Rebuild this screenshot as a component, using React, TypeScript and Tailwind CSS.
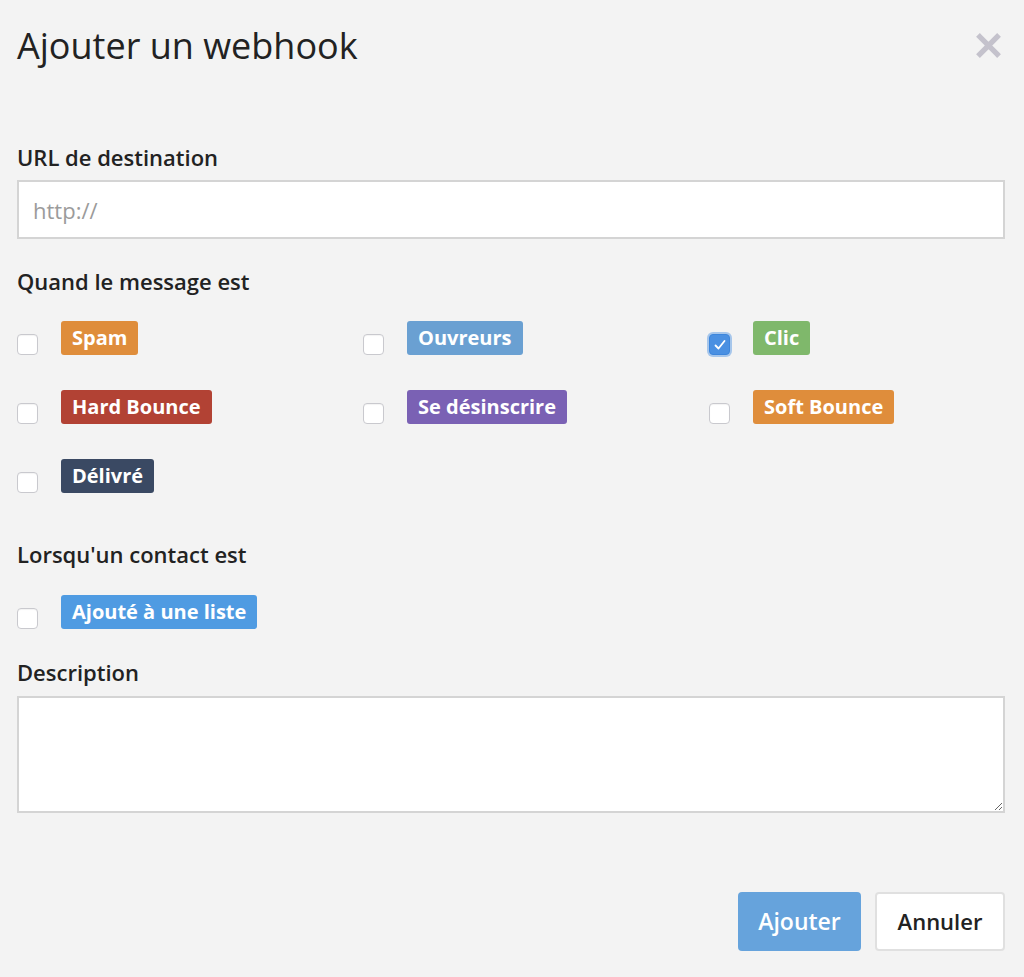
import React from 'react'

type Tag = { label: string; color: string; checked?: boolean }

const messageTags: Tag[] = [
  { label: 'Spam', color: 'bg-[#df8d3b]' },
  { label: 'Ouvreurs', color: 'bg-[#6aa0d2]' },
  { label: 'Clic', color: 'bg-[#7fb86b]', checked: true },
  { label: 'Hard Bounce', color: 'bg-[#b24234]' },
  { label: 'Se désinscrire', color: 'bg-[#7a61b4]' },
  { label: 'Soft Bounce', color: 'bg-[#df8d3b]' },
  { label: 'Délivré', color: 'bg-[#3a4963]' },
]

function Checkbox({ checked }: { checked?: boolean }) {
  if (checked) {
    return (
      <span className="flex h-[21px] w-[21px] shrink-0 items-center justify-center rounded-[4px] border border-[#3d86dc] bg-[#4a90e2] shadow-[0_0_0_2px_rgba(74,144,226,0.45)]">
        <svg width="14" height="14" viewBox="0 0 14 14" fill="none">
          <path d="M2.5 7.5 L5.5 10.5 L11.5 3" stroke="white" strokeWidth="1.8" strokeLinecap="round" strokeLinejoin="round" />
        </svg>
      </span>
    )
  }
  return <span className="block h-[21px] w-[21px] shrink-0 rounded-[4px] border border-[#c9c9ce] bg-white shadow-[inset_0_1px_1px_rgba(0,0,0,0.05)]" />
}

function TagOption({ tag }: { tag: Tag }) {
  return (
    <label className="flex items-end gap-[23px]">
      <Checkbox checked={tag.checked} />
      <span className={`${tag.color} rounded-[3px] px-[11px] text-[20px] font-bold leading-[34px] text-white`}>
        {tag.label}
      </span>
    </label>
  )
}

export default function App() {
  return (
    <div className="min-h-[977px] bg-[#f3f3f3] pl-[17px] pr-[19px] font-['Open_Sans',sans-serif] text-[#222]">
      {/* Header */}
      <div className="flex items-start justify-between pt-[22px]">
        <h1 className="text-[36px] font-normal leading-[48px] text-[#222]">Ajouter un webhook</h1>
        <button className="mr-[4px] mt-[11px] p-0">
          <svg width="25" height="25" viewBox="0 0 26 26">
            <path d="M4 4 L22 22 M22 4 L4 22" stroke="#c4c2cc" strokeWidth="5.5" strokeLinecap="square" />
          </svg>
        </button>
      </div>

      {/* URL */}
      <div className="mt-[73px] text-[22px] font-semibold leading-[28px]">URL de destination</div>
      <input
        className="mt-[9px] block h-[59px] w-full border-2 border-[#d4d4d4] bg-white px-[14px] text-[22px] text-[#333] outline-none placeholder:text-[#9b9b9b]"
        placeholder="http://"
      />

      {/* Message events */}
      <div className="mt-[28px] text-[22px] font-semibold leading-[28px]">Quand le message est</div>
      <div className="mt-[26px] grid grid-cols-[346px_346px_1fr] gap-y-[35px]">
        {messageTags.map((t) => (
          <TagOption key={t.label} tag={t} />
        ))}
      </div>

      {/* Contact events */}
      <div className="mt-[47px] text-[22px] font-semibold leading-[28px]">Lorsqu'un contact est</div>
      <div className="mt-[27px]">
        <TagOption tag={{ label: 'Ajouté à une liste', color: 'bg-[#4f9be2]' }} />
      </div>

      {/* Description */}
      <div className="mt-[29px] text-[22px] font-semibold leading-[28px]">Description</div>
      <textarea className="mt-[10px] block h-[117px] w-full border-2 border-[#d4d4d4] bg-white px-[14px] py-[10px] text-[20px] outline-none" />

      {/* Actions */}
      <div className="mt-[79px] flex justify-end gap-[14px]">
        <button className="h-[59px] w-[123px] rounded-[4px] bg-[#66a3dc] text-[23px] font-semibold text-white">
          Ajouter
        </button>
        <button className="h-[59px] w-[130px] rounded-[4px] border-2 border-[#e0e0e0] bg-white text-[22px] font-semibold text-[#222]">
          Annuler
        </button>
      </div>
    </div>
  )
}
